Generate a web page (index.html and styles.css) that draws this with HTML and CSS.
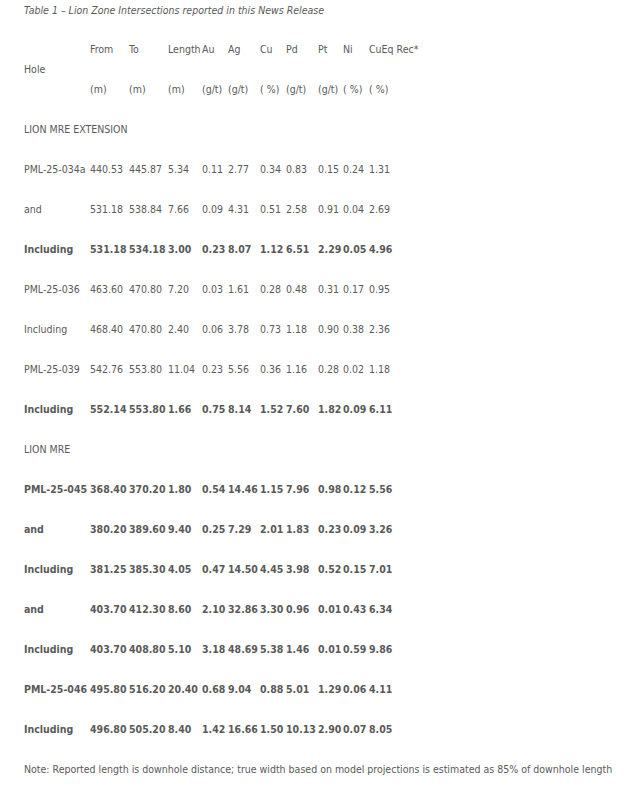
FILE: index.html
```html
<!DOCTYPE html>
<html lang="en">
<head>
<meta charset="utf-8">
<title>Table 1 – Lion Zone Intersections</title>
<link rel="stylesheet" href="styles.css">
</head>
<body>
<div class="page">
  <p class="caption">Table 1 – Lion Zone Intersections reported in this News Release</p>
  <table class="results">
    <colgroup>
      <col class="c-hole"><col class="c-from"><col class="c-to"><col class="c-len">
      <col class="c-au"><col class="c-ag"><col class="c-cu"><col class="c-pd">
      <col class="c-pt"><col class="c-ni"><col class="c-cueq">
    </colgroup>
    <thead>
      <tr>
        <th class="hole-head">Hole</th>
        <th>From<span class="unit">(m)</span></th>
        <th>To<span class="unit">(m)</span></th>
        <th>Length<span class="unit">(m)</span></th>
        <th>Au<span class="unit">(g/t)</span></th>
        <th>Ag<span class="unit">(g/t)</span></th>
        <th>Cu<span class="unit">( %)</span></th>
        <th>Pd<span class="unit">(g/t)</span></th>
        <th>Pt<span class="unit">(g/t)</span></th>
        <th>Ni<span class="unit">( %)</span></th>
        <th class="nowrap">CuEq Rec*<span class="unit">( %)</span></th>
      </tr>
    </thead>
    <tbody>
      <tr><td colspan="11" class="section">LION MRE EXTENSION</td></tr>
      <tr><td>PML-25-034a</td><td>440.53</td><td>445.87</td><td>5.34</td><td>0.11</td><td>2.77</td><td>0.34</td><td>0.83</td><td>0.15</td><td>0.24</td><td>1.31</td></tr>
      <tr><td>and</td><td>531.18</td><td>538.84</td><td>7.66</td><td>0.09</td><td>4.31</td><td>0.51</td><td>2.58</td><td>0.91</td><td>0.04</td><td>2.69</td></tr>
      <tr class="strong"><td>Including</td><td>531.18</td><td>534.18</td><td>3.00</td><td>0.23</td><td>8.07</td><td>1.12</td><td>6.51</td><td>2.29</td><td>0.05</td><td>4.96</td></tr>
      <tr><td>PML-25-036</td><td>463.60</td><td>470.80</td><td>7.20</td><td>0.03</td><td>1.61</td><td>0.28</td><td>0.48</td><td>0.31</td><td>0.17</td><td>0.95</td></tr>
      <tr><td>Including</td><td>468.40</td><td>470.80</td><td>2.40</td><td>0.06</td><td>3.78</td><td>0.73</td><td>1.18</td><td>0.90</td><td>0.38</td><td>2.36</td></tr>
      <tr><td>PML-25-039</td><td>542.76</td><td>553.80</td><td>11.04</td><td>0.23</td><td>5.56</td><td>0.36</td><td>1.16</td><td>0.28</td><td>0.02</td><td>1.18</td></tr>
      <tr class="strong"><td>Including</td><td>552.14</td><td>553.80</td><td>1.66</td><td>0.75</td><td>8.14</td><td>1.52</td><td>7.60</td><td>1.82</td><td>0.09</td><td>6.11</td></tr>
      <tr><td colspan="11" class="section">LION MRE</td></tr>
      <tr class="strong"><td>PML-25-045</td><td>368.40</td><td>370.20</td><td>1.80</td><td>0.54</td><td>14.46</td><td>1.15</td><td>7.96</td><td>0.98</td><td>0.12</td><td>5.56</td></tr>
      <tr class="strong"><td>and</td><td>380.20</td><td>389.60</td><td>9.40</td><td>0.25</td><td>7.29</td><td>2.01</td><td>1.83</td><td>0.23</td><td>0.09</td><td>3.26</td></tr>
      <tr class="strong"><td>Including</td><td>381.25</td><td>385.30</td><td>4.05</td><td>0.47</td><td>14.50</td><td>4.45</td><td>3.98</td><td>0.52</td><td>0.15</td><td>7.01</td></tr>
      <tr class="strong"><td>and</td><td>403.70</td><td>412.30</td><td>8.60</td><td>2.10</td><td>32.86</td><td>3.30</td><td>0.96</td><td>0.01</td><td>0.43</td><td>6.34</td></tr>
      <tr class="strong"><td>Including</td><td>403.70</td><td>408.80</td><td>5.10</td><td>3.18</td><td>48.69</td><td>5.38</td><td>1.46</td><td>0.01</td><td>0.59</td><td>9.86</td></tr>
      <tr class="strong"><td>PML-25-046</td><td>495.80</td><td>516.20</td><td>20.40</td><td>0.68</td><td>9.04</td><td>0.88</td><td>5.01</td><td>1.29</td><td>0.06</td><td>4.11</td></tr>
      <tr class="strong"><td>Including</td><td>496.80</td><td>505.20</td><td>8.40</td><td>1.42</td><td>16.66</td><td>1.50</td><td>10.13</td><td>2.90</td><td>0.07</td><td>8.05</td></tr>
    </tbody>
  </table>
  <p class="note">Note: Reported length is downhole distance; true width based on model projections is estimated as 85% of downhole length</p>
</div>
</body>
</html>
```

FILE: styles.css
```css
html, body {
  margin: 0;
  padding: 0;
  background: #ffffff;
}

.page {
  padding: 0 24px;
  font-family: "DejaVu Sans Condensed", "DejaVu Sans", sans-serif;
  font-stretch: condensed;
  font-size: 10.5px;
  line-height: 20px;
  color: #595959;
}

.caption {
  margin: 0 0 9px 0;
  font-style: italic;
}

.results {
  border-collapse: collapse;
  border-spacing: 0;
  table-layout: fixed;
  width: 425px;
}

.c-hole { width: 66px; }
.c-from { width: 39px; }
.c-to { width: 39px; }
.c-len { width: 34px; }
.c-au { width: 26px; }
.c-ag { width: 32px; }
.c-cu { width: 26px; }
.c-pd { width: 32px; }
.c-pt { width: 25px; }
.c-ni { width: 26px; }
.c-cueq { width: 80px; }

.results th,
.results td {
  padding: 10px 0;
  text-align: left;
  vertical-align: top;
  white-space: nowrap;
  overflow: visible;
  font-weight: normal;
}

.results th.hole-head {
  vertical-align: middle;
}

.unit {
  display: block;
  margin-top: 20px;
}

.strong td {
  font-weight: bold;
}

.note {
  margin: 10px 0 0 0;
  white-space: nowrap;
}
```
